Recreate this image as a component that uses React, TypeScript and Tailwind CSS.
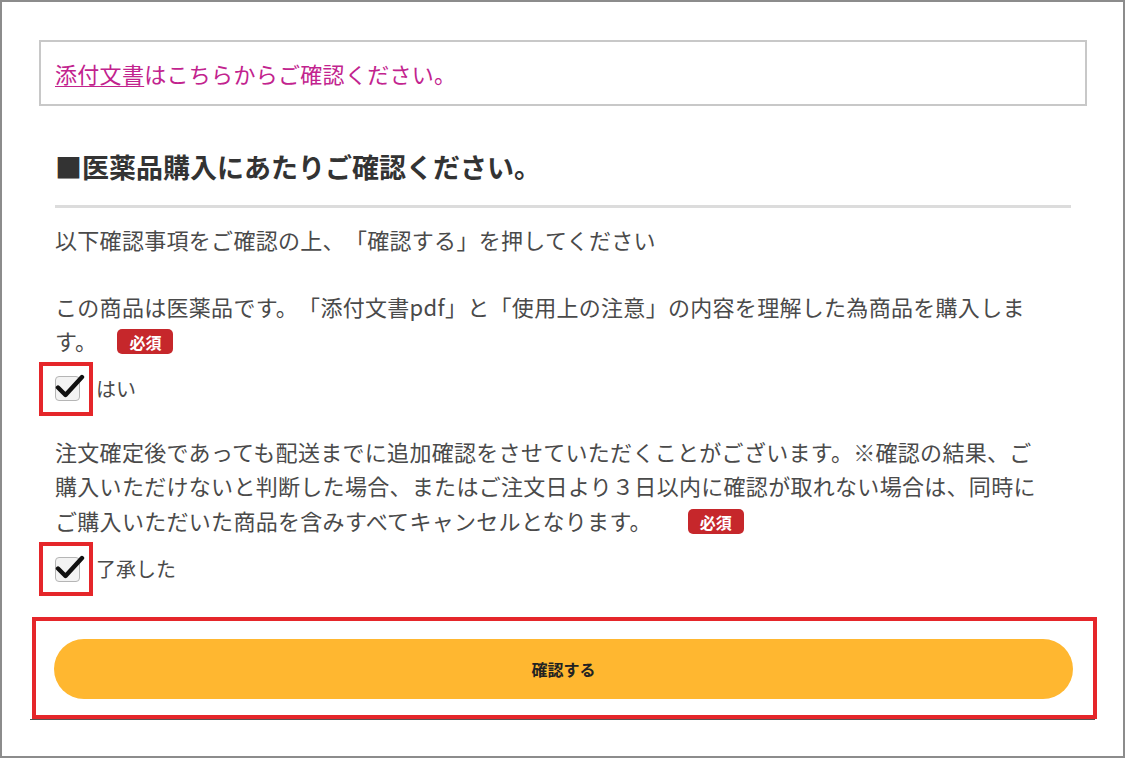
import React from "react";

const font = { fontFamily: '"Noto Sans CJK JP", "Noto Sans", sans-serif' };

// checked box with the heavy check mark, inside the red highlight frame
function CheckRow({ label }: { label: string }) {
  return (
    <div className="flex items-center">
      <div className="-ml-4 flex h-[54px] w-[54px] items-center border-4 border-[#e5262a] pl-[12px]">
        <div className="relative h-[25px] w-[25px] rounded-[4px] border border-[#b5b5b5] bg-[#f3f3f3]">
          <svg
            className="absolute -left-[1px] -top-[5px]"
            width="31"
            height="29"
            viewBox="0 0 31 29"
          >
            <path
              d="M3 15.5 L10.5 23 L27 5"
              fill="none"
              stroke="#111"
              strokeWidth="4.4"
              strokeLinecap="round"
              strokeLinejoin="round"
            />
          </svg>
        </div>
      </div>
      <span className="ml-[3px] text-[20px] text-[#4a4a4a]">{label}</span>
    </div>
  );
}

function Required({ className }: { className: string }) {
  return (
    <span
      className={`inline-flex h-[25px] w-[56px] items-center justify-center rounded-[5px] bg-[#c6272b] align-[1px] text-[16px] font-bold leading-none tracking-normal text-white ${className}`}
    >
      必須
    </span>
  );
}

export default function App() {
  return (
    <div
      className="h-[758px] w-[1125px] overflow-hidden border-2 border-[#8c8c8c] bg-white pl-[37px] pr-[36px] pt-[38px] [text-spacing-trim:space-all]"
      style={font}
    >
      {/* link to attached document */}
      <div className="flex h-[66px] items-center border-2 border-[#c8c8c8] pl-[14px]">
        <p className="text-[22px] tracking-[0.3px] text-[#c2238e]">
          <span className="underline decoration-1 underline-offset-[3px]">添付文書</span>
          はこちらからご確認ください。
        </p>
      </div>

      <div className="mx-4">
        <h2 className="mt-[43px] text-[27px] font-bold leading-[36px] text-[#333]">
          ■医薬品購入にあたりご確認ください。
        </h2>
        <div className="mt-[20px] h-[3px] bg-[#dcdcdc]" />

        <p className="mt-[14px] text-[22px] leading-[34.5px] tracking-[0.3px] text-[#4a4a4a]">
          以下確認事項をご確認の上、「確認する」を押してください
        </p>

        <p className="mt-[32px] w-[982px] text-[22px] leading-[34px] tracking-[0.3px] text-[#4a4a4a]">
          この商品は医薬品です。「添付文書pdf」と「使用上の注意」の内容を理解した為商品を購入します。
          <Required className="ml-5" />
        </p>
        <div className="mt-[5px]">
          <CheckRow label="はい" />
        </div>

        <p className="mt-[18px] w-[982px] text-[22px] leading-[34.5px] tracking-[0.3px] text-[#4a4a4a]">
          注文確定後であっても配送までに追加確認をさせていただくことがございます。※確認の結果、ご購入いただけないと判断した場合、またはご注文日より３日以内に確認が取れない場合は、同時にご購入いただいた商品を含みすべてキャンセルとなります。
          <Required className="ml-[36px]" />
        </p>
        <div className="mt-[5px]">
          <CheckRow label="了承した" />
        </div>
      </div>

      {/* confirm button, highlighted */}
      <div className="-ml-[7px] -mr-[10px] mt-[21px]">
        <div className="border-4 border-[#e5262a] pb-[16px] pl-[18px] pr-[20px] pt-[18px]">
          <button className="flex h-[60px] w-full items-center justify-center rounded-full bg-[#ffb730] text-[16px] font-bold text-[#222]">
            確認する
          </button>
        </div>
        <div className="-ml-[2px] mr-[2px] h-px bg-[#555]" />
      </div>
    </div>
  );
}
